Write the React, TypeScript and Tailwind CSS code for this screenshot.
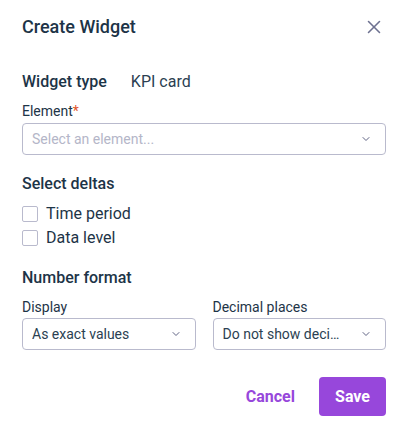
import { X, ChevronDown } from 'lucide-react';

const ink = 'text-[#1d3447]';

function SelectBox({ value, placeholder }: { value?: string; placeholder?: string }) {
  return (
    <div className="flex h-[32px] items-center justify-between rounded border border-[#b9bacd] bg-white pl-[9px] pr-[13px]">
      <span
        className={`truncate text-sm ${value ? 'text-[#2b3f52]' : 'text-[#b4b6c8]'}`}
      >
        {value ?? placeholder}
      </span>
      <ChevronDown className="ml-[10px] h-3 w-3 shrink-0 text-[#5f6384]" strokeWidth={2} />
    </div>
  );
}

function Check({ label }: { label: string }) {
  return (
    <label className="flex h-6 items-center gap-2">
      <span className="h-[16px] w-[16px] rounded-[2px] border border-[#b9bacd] bg-white" />
      <span className={`text-base ${ink}`}>{label}</span>
    </label>
  );
}

export default function App() {
  return (
    <div className="h-[432px] w-[406px] bg-white font-['Roboto',sans-serif]">
      <div className="flex flex-col pl-[22px] pr-[20px] pt-[13px]">
        <div className="flex items-center justify-between">
          <h2 className={`text-lg font-medium ${ink}`}>Create Widget</h2>
          <X className="mr-[1px] h-[22px] w-[22px] text-[#6d7190]" strokeWidth={1.7} />
        </div>

        <div className="mt-[29px] flex items-center gap-[24px]">
          <span className={`text-base font-medium ${ink}`}>Widget type</span>
          <span className="text-base text-[#2b3f52]">KPI card</span>
        </div>

        <div className="mt-[7px]">
          <p className={`text-sm ${ink}`}>
            Element<span className="text-[#e0552b]">*</span>
          </p>
          <div className="mt-[2px]">
            <SelectBox placeholder="Select an element..." />
          </div>
        </div>

        <p className={`mt-[17px] text-base font-medium ${ink}`}>Select deltas</p>
        <div className="mt-[6px] flex flex-col">
          <Check label="Time period" />
          <Check label="Data level" />
        </div>

        <p className={`mt-[16px] text-base font-medium ${ink}`}>Number format</p>
        <div className="mt-[7px] grid grid-cols-2 gap-[17px]">
          <div>
            <p className={`text-sm ${ink}`}>Display</p>
            <div className="mt-[1px]">
              <SelectBox value="As exact values" />
            </div>
          </div>
          <div>
            <p className={`text-sm ${ink}`}>Decimal places</p>
            <div className="mt-[1px]">
              <SelectBox value="Do not show decimals" />
            </div>
          </div>
        </div>

        <div className="mt-[27px] flex items-center justify-end gap-6">
          <button className="text-base font-bold text-[#9747db]">Cancel</button>
          <button className="h-[39px] w-[67px] rounded bg-[#9747db] text-base font-bold text-white">
            Save
          </button>
        </div>
      </div>
    </div>
  );
}
